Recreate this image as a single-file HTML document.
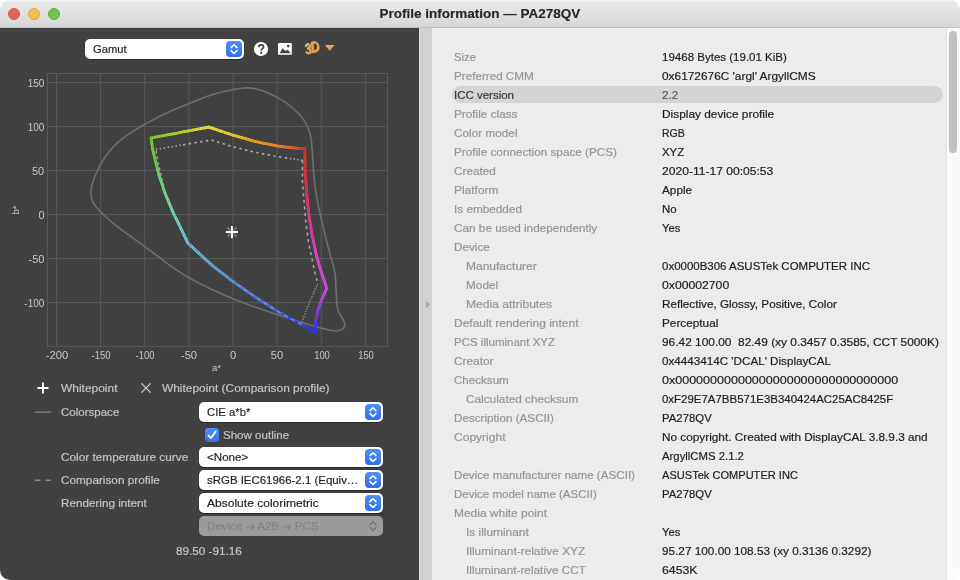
<!DOCTYPE html>
<html>
<head>
<meta charset="utf-8">
<title>Profile information — PA278QV</title>
<style>
*{box-sizing:border-box;margin:0;padding:0}
html,body{width:960px;height:580px;overflow:hidden;background:#fff}
body{font-family:"Liberation Sans",sans-serif;font-size:11.5px;position:relative}
#win{will-change:transform;position:absolute;left:0;top:0;width:960px;height:580px;border-radius:10px;overflow:hidden;background:transparent}
#titlebar{position:absolute;left:0;top:0;width:960px;height:28px;background:linear-gradient(#ebebeb,#d6d6d6);border-bottom:1px solid #c0c0c0;box-shadow:inset 0 1px 0 #f3f3f3}
#title{position:absolute;left:0;width:960px;top:6px;text-align:center;font-weight:bold;font-size:13px;color:#262626;transform:scaleX(1.039) translateX(-0.1px);-webkit-text-stroke:0.15px #262626}
.tl{position:absolute;top:8px;width:12px;height:12px;border-radius:50%}
#left{position:absolute;left:0;top:28px;width:419px;height:552px;background:#414141}
#split{position:absolute;left:419px;top:28px;width:13px;height:552px;background:#d2d2d2;border-left:1px solid #dedede}
#right{position:absolute;left:432px;top:28px;width:514px;height:552px;background:#ececec}
#sbar{position:absolute;left:946px;top:28px;width:14px;height:552px;background:#fafafa;border-left:1px solid #e6e6e6}
#thumb{position:absolute;left:2px;top:3px;width:8px;height:122px;border-radius:4px;background:#c1c1c1}
.sel{position:absolute;height:20px;border-radius:5px;background:#fff;color:#262626;font-size:11.5px;white-space:nowrap;overflow:hidden;box-shadow:0 0.5px 1px rgba(0,0,0,.35)}
.sel .st{position:absolute;left:8px;-webkit-text-stroke:0.2px;line-height:20px;transform-origin:0 50%;white-space:nowrap}
.sel .btn{position:absolute;right:2px;top:2px;width:16px;height:16px;border-radius:4px;background:linear-gradient(#4f8ff7,#2e6ff0)}
.sel.dis{background:#9b9b9b;color:#828282;box-shadow:none}
.lbl{position:absolute;color:#c4c4c4;-webkit-text-stroke:0.2px;font-size:11.5px;white-space:nowrap;line-height:16px;transform-origin:0 50%}
.ax{position:absolute;color:#c6c6c6;font-size:10px;white-space:nowrap;line-height:14px}
.k{position:absolute;left:21.5px;transform-origin:0 50%;color:#959595;-webkit-text-stroke:0.2px;white-space:nowrap;line-height:19px}
.k.i{left:34px}
.v{position:absolute;left:229.5px;transform-origin:0 50%;color:#1e1e1e;-webkit-text-stroke:0.2px;white-space:nowrap;line-height:19px}
#hl{position:absolute;left:20px;top:58px;width:491px;height:17px;border-radius:8.5px;background:#d4d4d4}
</style>
</head>
<body>
<div id="win">
  <div id="titlebar">
    <div class="tl" style="left:8px;background:#e0665b;border:0.5px solid #cf5247"></div>
    <div class="tl" style="left:28px;background:#f2bf4c;border:0.5px solid #dba634"></div>
    <div class="tl" style="left:48px;background:#70c556;border:0.5px solid #58ad40"></div>
    <div id="title">Profile information — PA278QV</div>
  </div>

  <div id="left">
    <svg width="419" height="580" style="position:absolute;left:0;top:-28px" viewBox="0 0 419 580"><g stroke="#595959" stroke-width="1" fill="none"><rect x="47.5" y="73.5" width="340.0" height="272.9"/><line x1="56.5" y1="73.5" x2="56.5" y2="346.4"/><line x1="100.6" y1="73.5" x2="100.6" y2="346.4"/><line x1="144.7" y1="73.5" x2="144.7" y2="346.4"/><line x1="188.9" y1="73.5" x2="188.9" y2="346.4"/><line x1="233.0" y1="73.5" x2="233.0" y2="346.4"/><line x1="277.1" y1="73.5" x2="277.1" y2="346.4"/><line x1="321.3" y1="73.5" x2="321.3" y2="346.4"/><line x1="365.4" y1="73.5" x2="365.4" y2="346.4"/><line x1="47.5" y1="302.5" x2="387.6" y2="302.5"/><line x1="47.5" y1="258.5" x2="387.6" y2="258.5"/><line x1="47.5" y1="214.5" x2="387.6" y2="214.5"/><line x1="47.5" y1="170.5" x2="387.6" y2="170.5"/><line x1="47.5" y1="126.5" x2="387.6" y2="126.5"/><line x1="47.5" y1="82.5" x2="387.6" y2="82.5"/></g><path d="M248.8 87.9 L251.7 88.1 L254.6 88.5 L257.5 89.2 L260.3 90.0 L263.1 90.9 L265.9 92.0 L268.6 93.2 L271.3 94.5 L274.0 95.8 L276.7 97.1 L279.3 98.6 L281.8 100.1 L284.3 101.7 L286.8 103.4 L289.2 105.2 L291.5 107.1 L293.8 109.0 L295.9 111.0 L298.1 113.1 L300.1 115.3 L302.0 117.5 L303.7 119.9 L305.3 122.4 L306.7 125.0 L307.9 127.7 L309.0 130.4 L309.8 133.3 L310.5 136.1 L311.0 139.1 L311.5 142.0 L311.8 145.0 L312.0 148.0 L312.3 151.0 L312.4 153.9 L312.6 156.9 L312.8 159.9 L313.0 162.9 L313.2 165.9 L313.4 168.9 L313.6 171.9 L313.8 174.9 L314.1 177.9 L314.4 180.9 L314.8 183.8 L315.1 186.8 L315.6 189.8 L316.0 192.7 L316.5 195.7 L317.0 198.6 L317.6 201.6 L318.1 204.5 L318.7 207.5 L319.4 210.4 L320.0 213.3 L320.6 216.3 L321.3 219.2 L322.0 222.1 L322.7 225.0 L323.4 227.9 L324.1 230.9 L324.8 233.8 L325.5 236.7 L326.3 239.6 L327.0 242.5 L327.7 245.4 L328.5 248.3 L329.3 251.2 L330.0 254.1 L330.8 257.0 L331.7 259.8 L332.5 262.7 L333.3 265.6 L334.0 268.4 L334.6 271.4 L335.1 274.3 L335.4 277.3 L335.7 280.2 L335.8 283.2 L335.9 286.2 L336.0 289.2 L336.2 292.2 L336.4 295.1 L336.5 298.1 L336.6 301.1 L336.9 304.1 L337.3 307.0 L338.0 309.9 L339.0 312.6 L340.4 315.3 L342.0 317.8 L343.5 320.3 L344.6 322.9 L344.8 325.6 L343.8 327.9 L341.8 329.6 L339.2 330.5 L336.3 330.8 L333.3 330.6 L330.4 330.2 L327.5 329.6 L324.5 328.9 L321.6 328.2 L318.7 327.4 L315.9 326.5 L313.0 325.7 L310.1 324.9 L307.2 324.0 L304.3 323.2 L301.5 322.3 L298.6 321.4 L295.7 320.6 L292.9 319.7 L290.0 318.8 L287.1 317.9 L284.3 317.0 L281.4 316.1 L278.6 315.1 L275.7 314.2 L272.9 313.2 L270.0 312.3 L267.2 311.3 L264.4 310.3 L261.5 309.3 L258.7 308.3 L255.9 307.3 L253.1 306.3 L250.2 305.3 L247.4 304.3 L244.6 303.2 L241.8 302.2 L239.0 301.1 L236.2 300.0 L233.4 298.9 L230.6 297.8 L227.9 296.6 L225.1 295.4 L222.4 294.2 L219.6 293.0 L216.9 291.8 L214.2 290.5 L211.5 289.2 L208.8 288.0 L206.1 286.6 L203.4 285.3 L200.7 284.0 L198.0 282.6 L195.4 281.2 L192.7 279.8 L190.1 278.3 L187.5 276.8 L184.9 275.3 L182.4 273.7 L179.9 272.1 L177.3 270.5 L174.9 268.8 L172.4 267.1 L169.9 265.4 L167.5 263.6 L165.1 261.8 L162.7 260.0 L160.3 258.2 L157.9 256.4 L155.6 254.6 L153.2 252.8 L150.8 251.0 L148.4 249.2 L145.9 247.4 L143.5 245.7 L141.1 243.9 L138.6 242.2 L136.2 240.4 L133.8 238.7 L131.3 236.9 L128.9 235.2 L126.5 233.4 L124.1 231.6 L121.7 229.8 L119.3 228.0 L116.9 226.1 L114.6 224.3 L112.2 222.4 L109.9 220.5 L107.7 218.5 L105.5 216.5 L103.3 214.5 L101.1 212.4 L99.0 210.3 L97.1 208.1 L95.3 205.8 L93.7 203.3 L92.4 200.7 L91.4 198.0 L90.9 195.2 L90.8 192.3 L91.1 189.4 L91.6 186.5 L92.4 183.7 L93.3 180.8 L94.3 178.0 L95.4 175.2 L96.5 172.5 L97.8 169.7 L99.1 167.1 L100.6 164.5 L102.0 161.9 L103.6 159.4 L105.3 156.9 L107.0 154.5 L108.8 152.1 L110.7 149.8 L112.7 147.6 L114.8 145.5 L116.9 143.4 L119.1 141.4 L121.4 139.5 L123.8 137.7 L126.2 135.9 L128.6 134.2 L131.1 132.5 L133.6 130.9 L136.1 129.3 L138.7 127.8 L141.3 126.3 L143.9 124.8 L146.6 123.4 L149.2 121.9 L151.8 120.5 L154.5 119.1 L157.1 117.7 L159.8 116.3 L162.5 115.0 L165.2 113.7 L167.9 112.4 L170.6 111.2 L173.4 110.0 L176.1 108.8 L178.9 107.7 L181.7 106.5 L184.4 105.4 L187.2 104.3 L190.0 103.2 L192.8 102.0 L195.6 100.9 L198.3 99.8 L201.1 98.7 L203.9 97.6 L206.7 96.6 L209.6 95.6 L212.4 94.7 L215.3 93.8 L218.1 93.0 L221.0 92.2 L223.9 91.5 L226.9 90.9 L229.8 90.2 L232.7 89.6 L235.7 89.1 L238.6 88.7 L241.5 88.3 L244.5 88.0 L247.4 87.9Z" fill="none" stroke="#6e6e6e" stroke-width="1.6" stroke-linejoin="round"/><g fill="none" stroke-width="2.8" stroke-linecap="round"><path d="M151.1 138.0 L155.2 137.2" stroke="#7ad529"/><path d="M155.2 137.2 L159.4 136.4" stroke="#83d62a"/><path d="M159.4 136.4 L163.5 135.6" stroke="#8cd82c"/><path d="M163.5 135.6 L167.6 134.9" stroke="#95d92d"/><path d="M167.6 134.9 L171.7 134.1" stroke="#9eda2e"/><path d="M171.7 134.1 L175.9 133.3" stroke="#a7dc30"/><path d="M175.9 133.3 L180.0 132.5" stroke="#b0dd31"/><path d="M180.0 132.5 L184.1 131.7" stroke="#b9df33"/><path d="M184.1 131.7 L188.3 131.0" stroke="#c2e034"/><path d="M188.3 131.0 L192.4 130.2" stroke="#cbe136"/><path d="M192.4 130.2 L196.5 129.4" stroke="#d4e237"/><path d="M196.5 129.4 L200.6 128.6" stroke="#dde338"/><path d="M200.6 128.6 L204.8 127.9" stroke="#e6e43a"/><path d="M204.8 127.9 L208.9 127.1" stroke="#efe53b"/><path d="M208.9 127.1 L212.9 128.4" stroke="#f4e43c"/><path d="M212.9 128.4 L217.0 129.8" stroke="#f4e03b"/><path d="M217.0 129.8 L221.0 131.1" stroke="#f5dd3a"/><path d="M221.0 131.1 L225.0 132.5" stroke="#f5d93a"/><path d="M225.0 132.5 L229.1 133.8" stroke="#f6d639"/><path d="M229.1 133.8 L233.1 135.2" stroke="#f6d238"/><path d="M233.1 135.2 L237.5 136.4" stroke="#f6cb36"/><path d="M237.5 136.4 L241.9 137.7" stroke="#f5c233"/><path d="M241.9 137.7 L246.2 138.9" stroke="#f4b830"/><path d="M246.2 138.9 L250.6 140.2" stroke="#f4ae2d"/><path d="M250.6 140.2 L255.0 141.4" stroke="#f3a52a"/><path d="M255.0 141.4 L259.5 142.3" stroke="#f39f28"/><path d="M259.5 142.3 L264.1 143.3" stroke="#f39c28"/><path d="M264.1 143.3 L268.6 144.2" stroke="#f29928"/><path d="M268.6 144.2 L273.2 145.2" stroke="#f29628"/><path d="M273.2 145.2 L277.7 146.1" stroke="#f29328"/><path d="M277.7 146.1 L282.2 146.6" stroke="#f18c28"/><path d="M282.2 146.6 L286.6 147.1" stroke="#ef7f27"/><path d="M286.6 147.1 L291.1 147.7" stroke="#ed7327"/><path d="M291.1 147.7 L295.6 148.2" stroke="#eb6626"/><path d="M295.6 148.2 L300.2 148.4" stroke="#e85626"/><path d="M300.2 148.4 L304.8 148.6" stroke="#e24226"/><path d="M304.8 148.6 L304.9 153.1" stroke="#e03828"/><path d="M304.9 153.1 L304.9 157.6" stroke="#e1372d"/><path d="M304.9 157.6 L305.0 162.0" stroke="#e23731"/><path d="M305.0 162.0 L305.0 166.5" stroke="#e33735"/><path d="M305.0 166.5 L305.1 171.0" stroke="#e4363a"/><path d="M305.1 171.0 L305.4 175.1" stroke="#e43640"/><path d="M305.4 175.1 L305.7 179.3" stroke="#e53647"/><path d="M305.7 179.3 L306.0 183.4" stroke="#e5364e"/><path d="M306.0 183.4 L306.3 187.6" stroke="#e53655"/><path d="M306.3 187.6 L306.6 191.7" stroke="#e6365c"/><path d="M306.6 191.7 L307.0 195.8" stroke="#e63662"/><path d="M307.0 195.8 L307.4 200.0" stroke="#e63767"/><path d="M307.4 200.0 L307.8 204.1" stroke="#e6376b"/><path d="M307.8 204.1 L308.2 208.3" stroke="#e6376f"/><path d="M308.2 208.3 L308.6 212.4" stroke="#e63874"/><path d="M308.6 212.4 L309.2 216.5" stroke="#e6397b"/><path d="M309.2 216.5 L309.8 220.7" stroke="#e53a86"/><path d="M309.8 220.7 L310.5 224.8" stroke="#e53b90"/><path d="M310.5 224.8 L311.1 229.0" stroke="#e53c9a"/><path d="M311.1 229.0 L311.7 233.1" stroke="#e43da5"/><path d="M311.7 233.1 L312.6 237.1" stroke="#e43fae"/><path d="M312.6 237.1 L313.4 241.1" stroke="#e240b5"/><path d="M313.4 241.1 L314.2 245.1" stroke="#e242bc"/><path d="M314.2 245.1 L315.1 249.0" stroke="#e044c4"/><path d="M315.1 249.0 L315.9 253.0" stroke="#e046cb"/><path d="M315.9 253.0 L316.8 257.0" stroke="#de47d2"/><path d="M316.8 257.0 L318.3 262.0" stroke="#dd49d8"/><path d="M318.3 262.0 L319.8 267.1" stroke="#dc4add"/><path d="M319.8 267.1 L321.3 272.1" stroke="#db4be2"/><path d="M321.3 272.1 L322.7 276.2" stroke="#da4ce4"/><path d="M322.7 276.2 L324.1 280.2" stroke="#d94de6"/><path d="M324.1 280.2 L325.4 284.3" stroke="#d94de6"/><path d="M325.4 284.3 L326.8 288.4" stroke="#d84ee8"/><path d="M326.8 288.4 L324.5 293.4" stroke="#d24ce8"/><path d="M324.5 293.4 L322.1 298.5" stroke="#c44aea"/><path d="M322.1 298.5 L320.1 303.9" stroke="#b446ea"/><path d="M320.1 303.9 L318.2 309.3" stroke="#a042ec"/><path d="M318.2 309.3 L317.0 314.8" stroke="#8a3eed"/><path d="M317.0 314.8 L315.9 320.2" stroke="#703cef"/><path d="M315.9 320.2 L315.7 324.3" stroke="#5a3af1"/><path d="M315.7 324.3 L315.6 328.3" stroke="#463af2"/><path d="M315.6 328.3 L315.4 332.4" stroke="#323af3"/><path d="M315.4 332.4 L311.5 330.3" stroke="#283bf4"/><path d="M311.5 330.3 L307.7 328.2" stroke="#2a3df4"/><path d="M307.7 328.2 L303.9 326.1" stroke="#2a3ff5"/><path d="M303.9 326.1 L300.0 324.0" stroke="#2c41f5"/><path d="M300.0 324.0 L296.4 321.9" stroke="#2d44f5"/><path d="M296.4 321.9 L292.7 319.9" stroke="#2e4af5"/><path d="M292.7 319.9 L289.1 317.9" stroke="#304ef5"/><path d="M289.1 317.9 L285.4 315.8" stroke="#3254f5"/><path d="M285.4 315.8 L281.8 313.8" stroke="#3458f5"/><path d="M281.8 313.8 L278.1 311.7" stroke="#355ef5"/><path d="M278.1 311.7 L274.5 309.4" stroke="#3762f5"/><path d="M274.5 309.4 L270.8 307.0" stroke="#3866f5"/><path d="M270.8 307.0 L267.2 304.7" stroke="#396af5"/><path d="M267.2 304.7 L263.5 302.4" stroke="#3b6ef5"/><path d="M263.5 302.4 L259.9 300.0" stroke="#3c72f5"/><path d="M259.9 300.0 L256.2 297.7" stroke="#3d76f5"/><path d="M256.2 297.7 L252.5 295.1" stroke="#3f7af5"/><path d="M252.5 295.1 L248.7 292.5" stroke="#407df5"/><path d="M248.7 292.5 L244.9 289.9" stroke="#4180f5"/><path d="M244.9 289.9 L241.2 287.2" stroke="#4384f5"/><path d="M241.2 287.2 L237.4 284.6" stroke="#4487f5"/><path d="M237.4 284.6 L233.6 282.0" stroke="#458af5"/><path d="M233.6 282.0 L230.1 279.3" stroke="#478ff5"/><path d="M230.1 279.3 L226.6 276.5" stroke="#4a95f4"/><path d="M226.6 276.5 L223.1 273.8" stroke="#4c9bf4"/><path d="M223.1 273.8 L219.5 271.1" stroke="#4ea1f4"/><path d="M219.5 271.1 L216.0 268.3" stroke="#50a7f4"/><path d="M216.0 268.3 L212.5 265.6" stroke="#53adf3"/><path d="M212.5 265.6 L209.1 262.5" stroke="#55b3f3"/><path d="M209.1 262.5 L205.6 259.4" stroke="#57b9f2"/><path d="M205.6 259.4 L202.2 256.2" stroke="#59bff2"/><path d="M202.2 256.2 L198.8 253.1" stroke="#5bc5f1"/><path d="M198.8 253.1 L195.1 249.7" stroke="#5dc9f1"/><path d="M195.1 249.7 L191.5 246.4" stroke="#5fccf2"/><path d="M191.5 246.4 L187.8 243.0" stroke="#61cff2"/><path d="M187.8 243.0 L186.1 239.3" stroke="#62d2f0"/><path d="M186.1 239.3 L184.3 235.6" stroke="#63d6ec"/><path d="M184.3 235.6 L182.6 231.8" stroke="#63dae8"/><path d="M182.6 231.8 L180.8 228.1" stroke="#64dee4"/><path d="M180.8 228.1 L178.5 223.4" stroke="#65e1dc"/><path d="M178.5 223.4 L176.1 218.7" stroke="#66e3d1"/><path d="M176.1 218.7 L173.8 214.0" stroke="#67e5c6"/><path d="M173.8 214.0 L172.0 209.9" stroke="#68e6bc"/><path d="M172.0 209.9 L170.3 205.9" stroke="#69e6b3"/><path d="M170.3 205.9 L168.6 201.8" stroke="#6ae6ab"/><path d="M168.6 201.8 L166.9 197.8" stroke="#6be6a3"/><path d="M166.9 197.8 L165.2 193.8" stroke="#6ce69a"/><path d="M165.2 193.8 L163.6 189.1" stroke="#6ce691"/><path d="M163.6 189.1 L162.1 184.4" stroke="#6ee487"/><path d="M162.1 184.4 L160.5 179.7" stroke="#6ee47d"/><path d="M160.5 179.7 L158.9 175.0" stroke="#70e273"/><path d="M158.9 175.0 L157.8 170.2" stroke="#70e066"/><path d="M157.8 170.2 L156.6 165.3" stroke="#72de58"/><path d="M156.6 165.3 L155.6 161.4" stroke="#72db4c"/><path d="M155.6 161.4 L154.6 157.5" stroke="#74d945"/><path d="M154.6 157.5 L153.7 153.6" stroke="#74d73d"/><path d="M153.7 153.6 L152.7 149.7" stroke="#76d536"/><path d="M152.7 149.7 L151.9 143.8" stroke="#76d430"/><path d="M151.9 143.8 L151.1 138.0" stroke="#76d42a"/></g><path d="M151.1 138.0 L180.0 132.5 L208.9 127.1 L233.1 135.2 L255.0 141.4 L277.7 146.1 L295.6 148.2 L304.8 148.6 L305.1 171.0 L306.6 191.7 L308.6 212.4 L311.7 233.1 L316.8 257.0 L321.3 272.1 L326.8 288.4 L322.1 298.5 L318.2 309.3 L315.9 320.2 L315.4 332.4 L300.0 324.0 L278.1 311.7 L256.2 297.7 L233.6 282.0 L212.5 265.6 L198.8 253.1 L187.8 243.0 L180.8 228.1 L173.8 214.0 L165.2 193.8 L158.9 175.0 L156.6 165.3 L152.7 149.7Z" fill="none" stroke="#000" stroke-opacity="0.2" stroke-width="1.3" stroke-dasharray="0.9 0.9"/><path d="M155.8 149.4 L183.0 144.8" fill="none" stroke="#acacac" stroke-width="1.7" stroke-dasharray="1.4 2.6"/><path d="M183.0 144.8 L211.6 140.0 L233.1 146.9 L255.0 152.3 L277.7 156.6 L290.0 158.5" fill="none" stroke="#acacac" stroke-width="1.7" stroke-dasharray="2.4 3.4"/><path d="M290.0 158.5 L302.5 160.3" fill="none" stroke="#acacac" stroke-width="1.7" stroke-dasharray="1.4 2.2"/><path d="M302.5 160.3 L302.4 181.4 L304.1 202.1 L305.9 222.8 L308.6 243.4 L311.7 257.0 L314.3 270.5 L317.8 283.7" fill="none" stroke="#a2a2a2" stroke-width="1.6" stroke-dasharray="3 3.6"/><path d="M317.8 283.7 L309.7 301.6 L301.9 321.8" fill="none" stroke="#9c9c9c" stroke-width="1.4" stroke-dasharray="1.2 1.5"/><path d="M301.6 324.6 L278.1 311.5 L256.2 297.5 L233.6 281.8 L212.5 265.4 L198.8 252.9 L188.2 242.8" fill="none" stroke="#8e8e8e" stroke-width="1.5" stroke-dasharray="4 4"/><path d="M188.2 242.8 L181.4 227.9 L174.4 213.8 L165.9 193.5 L161.2 176.2 L158.1 162.2 L155.8 149.4" fill="none" stroke="#a0a0a0" stroke-width="1.5" stroke-dasharray="2.6 3"/><g fill="none"><path d="M227.30 227.45 l9.2 9.2 M236.50 227.45 l-9.2 9.2" stroke-width="1.3" stroke="#8e8e8e"/><path d="M225.45 232.05 h12.9 M231.90 225.60 v12.9" stroke-width="3.2" stroke="#333" stroke-opacity="0.55"/><path d="M225.80 232.05 h12.2 M231.90 225.95 v12.2" stroke-width="2" stroke="#fff"/></g></svg>
    <div class="ax" style="right:374.7px;top:268.9px;transform-origin:100% 50%;transform:scaleX(1)">-100</div>
    <div class="ax" style="right:374.7px;top:224.9px;transform-origin:100% 50%;transform:scaleX(1.1)">-50</div>
    <div class="ax" style="right:374.7px;top:180.9px;transform-origin:100% 50%;transform:scaleX(1.1)">0</div>
    <div class="ax" style="right:374.7px;top:136.9px;transform-origin:100% 50%;transform:scaleX(1.1)">50</div>
    <div class="ax" style="right:374.7px;top:92.9px;transform-origin:100% 50%;transform:scaleX(1)">100</div>
    <div class="ax" style="right:374.7px;top:48.9px;transform-origin:100% 50%;transform:scaleX(1)">150</div>
    <div class="ax" style="left:36.7px;top:321.2px;width:40px;text-align:center;transform:scaleX(1.12)">-200</div>
    <div class="ax" style="left:80.8px;top:321.2px;width:40px;text-align:center;transform:scaleX(0.94)">-150</div>
    <div class="ax" style="left:124.9px;top:321.2px;width:40px;text-align:center;transform:scaleX(0.94)">-100</div>
    <div class="ax" style="left:169.1px;top:321.2px;width:40px;text-align:center;transform:scaleX(1.12)">-50</div>
    <div class="ax" style="left:213.2px;top:321.2px;width:40px;text-align:center;transform:scaleX(1.12)">0</div>
    <div class="ax" style="left:257.3px;top:321.2px;width:40px;text-align:center;transform:scaleX(1.12)">50</div>
    <div class="ax" style="left:301.5px;top:321.2px;width:40px;text-align:center;transform:scaleX(0.94)">100</div>
    <div class="ax" style="left:345.6px;top:321.2px;width:40px;text-align:center;transform:scaleX(0.94)">150</div>
    <div class="ax" style="left:212px;top:333.0px;font-size:9.5px">a*</div>
    <div class="ax" style="left:9px;top:175.0px;font-size:9.5px;transform:rotate(-90deg);width:14px;text-align:center">b*</div>
    <div class="sel" style="left:85px;top:11px;width:159px"><span class="st" id="s0" style="top:0px;transform:scaleX(0.9764)">Gamut</span><div class="btn"><svg class="chev" width="16" height="16" viewBox="0 0 16 16" style="position:absolute;left:0;top:0"><path d="M5 6.6 L8 3.7 L11 6.6 M5 9.6 L8 12.5 L11 9.6" fill="none" stroke="#fff" stroke-width="1.5" stroke-linecap="round" stroke-linejoin="round"/></svg></div></div>
    <svg width="16" height="16" viewBox="0 0 16 16" style="position:absolute;left:253.05px;top:12.5px"><circle cx="8" cy="8" r="7.1" fill="#fff"/><path d="M5.7 6.3 C5.7 4.6 6.8 3.9 8.1 3.9 C9.5 3.9 10.5 4.7 10.5 6 C10.5 7.6 8.3 7.7 8.2 9.6" fill="none" stroke="#414141" stroke-width="1.7"/><circle cx="8.15" cy="11.9" r="1.05" fill="#414141"/></svg>
    <svg width="15" height="13" viewBox="0 0 15 13" style="position:absolute;left:278.1px;top:14.75px"><rect x="0" y="0" width="13.8" height="11.7" rx="0.8" fill="#fff"/><path d="M2 9.9 L4.7 5.5 L7.2 8.2 L9.6 6.9 L12.2 9.9 Z" fill="#414141" stroke="#414141" stroke-width="0.5" stroke-linejoin="round"/><circle cx="10.3" cy="3.1" r="1.3" fill="#414141"/></svg>
    <div id="i3d" style="position:absolute;left:304.8px;top:12.6px;font-size:15px;font-weight:bold;font-style:italic;color:#e8a457;letter-spacing:-0.8px;line-height:18px;transform-origin:0 50%;transform:rotate(-16deg) scaleX(0.82);text-shadow:0.5px 0.7px 0 #a86c34,-0.4px -0.4px 0 #f6cf9f">3D</div>
    <svg width="10" height="7" style="position:absolute;left:324.8px;top:16.9px"><defs><linearGradient id="tg" x1="0" y1="0" x2="0" y2="1"><stop offset="0" stop-color="#f0b070"/><stop offset="1" stop-color="#d9853a"/></linearGradient></defs><path d="M0 0 H9.4 L4.7 6 Z" fill="url(#tg)"/></svg>
    <svg width="60" height="120" style="position:absolute;left:0;top:342px" viewBox="0 370 60 120"><path d="M37.5 388 h11 M43 382.5 v11" stroke="#fff" stroke-width="1.9" fill="none"/><path d="M35 412.2 h16" stroke="#7a7a7a" stroke-width="1.6"/><path d="M35 480.2 h5.5 M45.5 480.2 h5.5" stroke="#8a8a8a" stroke-width="1.6"/></svg>
    <svg width="12" height="12" style="position:absolute;left:140px;top:354.1px"><path d="M1.4 1.4 L10.6 10.6 M10.6 1.4 L1.4 10.6" stroke="#d4d4d4" stroke-width="1.25" fill="none"/></svg>
    <div class="lbl" id="l0" style="left:61px;top:352px;transform:scaleX(1.0397)">Whitepoint</div>
    <div class="lbl" id="l1" style="left:161.5px;top:352px;transform:scaleX(1.0358)">Whitepoint (Comparison profile)</div>
    <div class="lbl" id="l2" style="left:61px;top:376px;transform:scaleX(1.0022)">Colorspace</div>
    <div class="sel" style="left:199px;top:374px;width:184px"><span class="st" id="s1" style="top:0px;transform:scaleX(0.9862)">CIE a*b*</span><div class="btn"><svg class="chev" width="16" height="16" viewBox="0 0 16 16" style="position:absolute;left:0;top:0"><path d="M5 6.6 L8 3.7 L11 6.6 M5 9.6 L8 12.5 L11 9.6" fill="none" stroke="#fff" stroke-width="1.5" stroke-linecap="round" stroke-linejoin="round"/></svg></div></div>
    <div style="position:absolute;left:205px;top:400px;width:14px;height:14px;border-radius:3.5px;background:linear-gradient(#4f8ff7,#2f70f0)"><svg width="14" height="14" viewBox="0 0 14 14" style="position:absolute;left:0;top:0"><path d="M3.4 7.4 L5.9 10.2 L10.6 3.6" fill="none" stroke="#fff" stroke-width="1.8" stroke-linecap="round" stroke-linejoin="round"/></svg></div>
    <div class="lbl" id="l3" style="left:223px;top:399px;transform:scaleX(1.0037)">Show outline</div>
    <div class="lbl" id="l4" style="left:61px;top:421px;transform:scaleX(1.0258)">Color temperature curve</div>
    <div class="sel" style="left:199px;top:419px;width:184px"><span class="st" id="s2" style="top:0px;transform:scaleX(1.0089)">&lt;None&gt;</span><div class="btn"><svg class="chev" width="16" height="16" viewBox="0 0 16 16" style="position:absolute;left:0;top:0"><path d="M5 6.6 L8 3.7 L11 6.6 M5 9.6 L8 12.5 L11 9.6" fill="none" stroke="#fff" stroke-width="1.5" stroke-linecap="round" stroke-linejoin="round"/></svg></div></div>
    <div class="lbl" id="l5" style="left:61px;top:444px;transform:scaleX(1.0237)">Comparison profile</div>
    <div class="sel" style="left:199px;top:442px;width:184px"><span class="st" id="s3" style="top:0px;transform:scaleX(0.9946)">sRGB IEC61966-2.1 (Equiv…</span><div class="btn"><svg class="chev" width="16" height="16" viewBox="0 0 16 16" style="position:absolute;left:0;top:0"><path d="M5 6.6 L8 3.7 L11 6.6 M5 9.6 L8 12.5 L11 9.6" fill="none" stroke="#fff" stroke-width="1.5" stroke-linecap="round" stroke-linejoin="round"/></svg></div></div>
    <div class="lbl" id="l6" style="left:61px;top:467px;transform:scaleX(1.0165)">Rendering intent</div>
    <div class="sel" style="left:199px;top:465px;width:184px"><span class="st" id="s4" style="top:0px;transform:scaleX(1.0465)">Absolute colorimetric</span><div class="btn"><svg class="chev" width="16" height="16" viewBox="0 0 16 16" style="position:absolute;left:0;top:0"><path d="M5 6.6 L8 3.7 L11 6.6 M5 9.6 L8 12.5 L11 9.6" fill="none" stroke="#fff" stroke-width="1.5" stroke-linecap="round" stroke-linejoin="round"/></svg></div></div>
    <div class="sel dis" style="left:199px;top:488px;width:184px"><span class="st" id="s5" style="top:0px;transform:scaleX(1.0093)">Device <svg width="8.4" height="8" viewBox="0 0 8.4 8" style="display:inline-block;vertical-align:-0.6px;margin:0 0.3px"><path d="M0.4 4 H7.6 M5 1.4 L7.7 4 L5 6.6" fill="none" stroke="#808080" stroke-width="1.05" stroke-linecap="round" stroke-linejoin="round"/></svg> A2B <svg width="8.4" height="8" viewBox="0 0 8.4 8" style="display:inline-block;vertical-align:-0.6px;margin:0 0.3px"><path d="M0.4 4 H7.6 M5 1.4 L7.7 4 L5 6.6" fill="none" stroke="#808080" stroke-width="1.05" stroke-linecap="round" stroke-linejoin="round"/></svg> PCS</span><div class="btn" style="background:none"><svg class="chev" width="16" height="16" viewBox="0 0 16 16" style="position:absolute;left:0;top:0"><path d="M5 6.6 L8 3.7 L11 6.6 M5 9.6 L8 12.5 L11 9.6" fill="none" stroke="#787878" stroke-width="1.5" stroke-linecap="round" stroke-linejoin="round"/></svg></div></div>
    <div class="lbl" id="l7" style="left:175.5px;top:515px;transform:scaleX(1.0202)">89.50 -91.16</div>
  </div>

  <div id="split">
    <svg width="13" height="552" style="position:absolute;left:0;top:0"><path d="M5.9 272.7 L10.05 276.5 L5.9 280.4 Z" fill="#a8a8a8"/></svg>
  </div>

  <div id="right">
    <div id="hl"></div>
    <div class="k" id="k0" style="top:19.5px;transform:scaleX(0.9832)">Size</div>
    <div class="v" id="v0" style="top:19.5px;transform:scaleX(1.0018)">19468 Bytes (19.01 KiB)</div>
    <div class="k" id="k1" style="top:38.5px;transform:scaleX(1.0145)">Preferred CMM</div>
    <div class="v" id="v1" style="top:38.5px;transform:scaleX(1.0318)">0x6172676C 'argl' ArgyllCMS</div>
    <div class="k" id="k2" style="top:57.5px;color:#383838;transform:scaleX(0.9987)">ICC version</div>
    <div class="v" id="v2" style="top:57.5px;color:#5c5c5c;transform:scaleX(1.0125)">2.2</div>
    <div class="k" id="k3" style="top:76.5px;transform:scaleX(1.0242)">Profile class</div>
    <div class="v" id="v3" style="top:76.5px;transform:scaleX(1.0325)">Display device profile</div>
    <div class="k" id="k4" style="top:95.5px;transform:scaleX(1.0242)">Color model</div>
    <div class="v" id="v4" style="top:95.5px;transform:scaleX(0.9149)">RGB</div>
    <div class="k" id="k5" style="top:114.5px;transform:scaleX(1.0199)">Profile connection space (PCS)</div>
    <div class="v" id="v5" style="top:114.5px;transform:scaleX(0.9922)">XYZ</div>
    <div class="k" id="k6" style="top:133.5px;transform:scaleX(1.0202)">Created</div>
    <div class="v" id="v6" style="top:133.5px;transform:scaleX(1.0506)">2020-11-17 00:05:53</div>
    <div class="k" id="k7" style="top:152.5px;transform:scaleX(1.039)">Platform</div>
    <div class="v" id="v7" style="top:152.5px;transform:scaleX(1.023)">Apple</div>
    <div class="k" id="k8" style="top:171.5px;transform:scaleX(1.0226)">Is embedded</div>
    <div class="v" id="v8" style="top:171.5px;transform:scaleX(0.993)">No</div>
    <div class="k" id="k9" style="top:190.5px;transform:scaleX(1.023)">Can be used independently</div>
    <div class="v" id="v9" style="top:190.5px;transform:scaleX(0.9752)">Yes</div>
    <div class="k" id="k10" style="top:209.5px;transform:scaleX(1.0169)">Device</div>
    <div class="k i" id="k11" style="top:228.5px;transform:scaleX(1.044)">Manufacturer</div>
    <div class="v" id="v11" style="top:228.5px;transform:scaleX(0.9983)">0x0000B306 ASUSTek COMPUTER INC</div>
    <div class="k i" id="k12" style="top:247.5px;transform:scaleX(1.0294)">Model</div>
    <div class="v" id="v12" style="top:247.5px;transform:scaleX(1.0614)">0x00002700</div>
    <div class="k i" id="k13" style="top:266.5px;transform:scaleX(1.051)">Media attributes</div>
    <div class="v" id="v13" style="top:266.5px;transform:scaleX(1.018)">Reflective, Glossy, Positive, Color</div>
    <div class="k" id="k14" style="top:285.5px;transform:scaleX(1.0413)">Default rendering intent</div>
    <div class="v" id="v14" style="top:285.5px;transform:scaleX(1.0239)">Perceptual</div>
    <div class="k" id="k15" style="top:304.5px;transform:scaleX(1.0002)">PCS illuminant XYZ</div>
    <div class="v" id="v15" style="top:304.5px;transform:scaleX(1.0344)">96.42 100.00&nbsp; 82.49 (xy 0.3457 0.3585, CCT 5000K)</div>
    <div class="k" id="k16" style="top:323.5px;transform:scaleX(1.0297)">Creator</div>
    <div class="v" id="v16" style="top:323.5px;transform:scaleX(1.0134)">0x4443414C 'DCAL' DisplayCAL</div>
    <div class="k" id="k17" style="top:342.5px;transform:scaleX(1.0078)">Checksum</div>
    <div class="v" id="v17" style="top:342.5px;transform:scaleX(1.089)">0x00000000000000000000000000000000</div>
    <div class="k i" id="k18" style="top:361.5px;transform:scaleX(1.0269)">Calculated checksum</div>
    <div class="v" id="v18" style="top:361.5px;transform:scaleX(0.9961)">0xF29E7A7BB571E3B340424AC25AC8425F</div>
    <div class="k" id="k19" style="top:380.5px;transform:scaleX(1.016)">Description (ASCII)</div>
    <div class="v" id="v19" style="top:380.5px;transform:scaleX(0.9901)">PA278QV</div>
    <div class="k" id="k20" style="top:399.5px;transform:scaleX(1.0463)">Copyright</div>
    <div class="v" id="v20" style="top:399.5px;transform:scaleX(1.0254)">No copyright. Created with DisplayCAL 3.8.9.3 and</div>
    <div class="v" id="v21" style="top:418.5px;transform:scaleX(0.9856)">ArgyllCMS 2.1.2</div>
    <div class="k" id="k22" style="top:437.5px;transform:scaleX(1.0114)">Device manufacturer name (ASCII)</div>
    <div class="v" id="v22" style="top:437.5px;transform:scaleX(0.9623)">ASUSTek COMPUTER INC</div>
    <div class="k" id="k23" style="top:456.5px;transform:scaleX(1.0015)">Device model name (ASCII)</div>
    <div class="v" id="v23" style="top:456.5px;transform:scaleX(0.9901)">PA278QV</div>
    <div class="k" id="k24" style="top:475.5px;transform:scaleX(1.0391)">Media white point</div>
    <div class="k i" id="k25" style="top:494.5px;transform:scaleX(1.0335)">Is illuminant</div>
    <div class="v" id="v25" style="top:494.5px;transform:scaleX(0.9752)">Yes</div>
    <div class="k i" id="k26" style="top:513.5px;transform:scaleX(1.0308)">Illuminant-relative XYZ</div>
    <div class="v" id="v26" style="top:513.5px;transform:scaleX(1.0234)">95.27 100.00 108.53 (xy 0.3136 0.3292)</div>
    <div class="k i" id="k27" style="top:532.5px;transform:scaleX(1.0261)">Illuminant-relative CCT</div>
    <div class="v" id="v27" style="top:532.5px;transform:scaleX(1.0672)">6453K</div>
  </div>
  <div id="sbar"><div id="thumb"></div></div>
</div>
</body>
</html>
